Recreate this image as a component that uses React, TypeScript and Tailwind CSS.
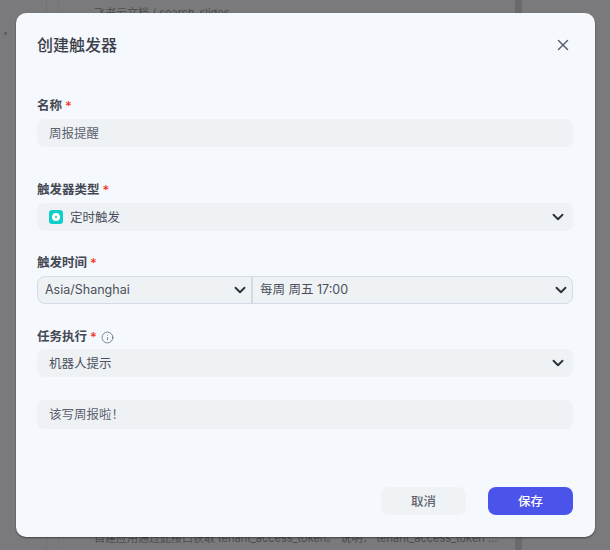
import { ChevronDown, Info, X } from 'lucide-react';
import type { ReactNode } from 'react';

const font = { fontFamily: 'Inter, "Noto Sans CJK SC", sans-serif' };

function Label({ children, hint }: { children: ReactNode; hint?: boolean }) {
  return (
    <div className="flex h-[20px] items-center pt-[2px] text-[12.5px] font-semibold leading-[20px] text-[#434854]">
      <span>{children}</span>
      <span className="ml-[3px] text-[13px] font-medium text-[#f5351f]">*</span>
      {hint && <Info size={13} strokeWidth={1.5} className="ml-[4px] text-[#5f6779]" />}
    </div>
  );
}

function Chevron() {
  return <ChevronDown size={18} strokeWidth={2.5} className="text-[#2c303a]" />;
}

function Background() {
  return (
    <div className="flex h-[550px] w-[610px] overflow-hidden bg-[#7a7a7c] text-[11px] text-[#4c4c4e]">
      <div className="w-[47px] border-r border-[#727274] pl-[4px] pt-[32px]">
        <div className="h-[3px] w-[3px] rounded-full border border-[#4c4c4e]" />
      </div>
      <div className="w-[12px] border-r border-[#757577]" />
      <div className="flex w-[456px] flex-col justify-between pl-[35px]">
        <div className="mt-[3px] whitespace-nowrap leading-[20px]">飞书云文档 / search_slides</div>
        <div className="mb-[2px] whitespace-nowrap leading-[20px]">
          自建应用通过此接口获取 tenant_access_token。 说明： tenant_access_token ...
        </div>
      </div>
      <div className="w-[7px] bg-[#6a6a6c]" />
    </div>
  );
}

export default function App() {
  return (
    <div className="relative h-[550px] w-[610px] overflow-hidden" style={font}>
      <Background />
      <div className="absolute left-[16px] top-[13px] flex h-[524px] w-[579px] flex-col rounded-[10px] bg-[#f5f8fc] pl-[21px] pr-[22px] shadow-[0_1px_2px_rgba(0,0,0,0.45)]">
        <div className="flex h-[64px] shrink-0 items-center justify-between">
          <h1 className="text-[16px] font-medium text-[#3c404a]">创建触发器</h1>
          <X size={18} strokeWidth={2} className="mr-[1px] text-[#5b5f6b]" />
        </div>

        <div className="mt-[18px]">
          <Label>名称</Label>
          <div className="mt-[4px] flex h-[28px] items-center rounded-[8px] bg-[#eff2f5] px-[12px] pt-[2px] text-[12.5px] text-[#5d6270]">
            周报提醒
          </div>
        </div>

        <div className="mt-[32px]">
          <Label>触发器类型</Label>
          <div className="mt-[4px] flex h-[28px] items-center rounded-[8px] bg-[#eff2f5] pl-[12px] pr-[6px] text-[12.5px] text-[#4a4f5b]">
            <span className="flex h-[14px] w-[14px] items-center justify-center rounded-[3px] bg-[#0fcfc8]">
              <span className="flex h-[8px] w-[8px] items-center justify-center rounded-full bg-white">
                <span className="h-[2px] w-[2px] rounded-full bg-[#0fcfc8]" />
              </span>
            </span>
            <span className="ml-[7px] flex-1 pt-[2px]">定时触发</span>
            <Chevron />
          </div>
        </div>

        <div className="mt-[21px]">
          <Label>触发时间</Label>
          <div className="mt-[4px] flex h-[28px] rounded-[8px] border border-[#d5dbe6] bg-[#eff2f5] text-[12.5px] text-[#4a4f5b]">
            <div className="flex w-[215px] items-center justify-between border-r-2 border-[#d5dbe6] pl-[7px] pr-[2px]">
              <span className="pt-[1px]">Asia/Shanghai</span>
              <Chevron />
            </div>
            <div className="flex flex-1 items-center justify-between pl-[7px] pr-[2px]">
              <span className="pt-[1px]">每周 周五 17:00</span>
              <Chevron />
            </div>
          </div>
        </div>

        <div className="mt-[22px]">
          <Label hint>任务执行</Label>
          <div className="mt-[3px] flex h-[28px] items-center justify-between rounded-[8px] bg-[#eff2f5] pl-[12px] pr-[6px] text-[12.5px] text-[#4a4f5b]">
            <span className="pt-[2px]">机器人提示</span>
            <Chevron />
          </div>
        </div>

        <div className="mt-[23px] flex h-[29px] items-center rounded-[8px] bg-[#eff2f5] px-[12px] pt-[2px] text-[12.5px] text-[#5d6270]">
          该写周报啦！
        </div>

        <div className="mt-[58px] flex justify-end gap-[22px]">
          <button className="h-[28px] w-[85px] rounded-[8px] bg-[#f0f3f6] pt-[2px] text-[12.5px] font-medium text-[#5f6470]">
            取消
          </button>
          <button className="h-[28px] w-[85px] rounded-[8px] bg-[#4a53ea] pt-[2px] text-[12.5px] font-medium text-white">
            保存
          </button>
        </div>
      </div>
    </div>
  );
}
